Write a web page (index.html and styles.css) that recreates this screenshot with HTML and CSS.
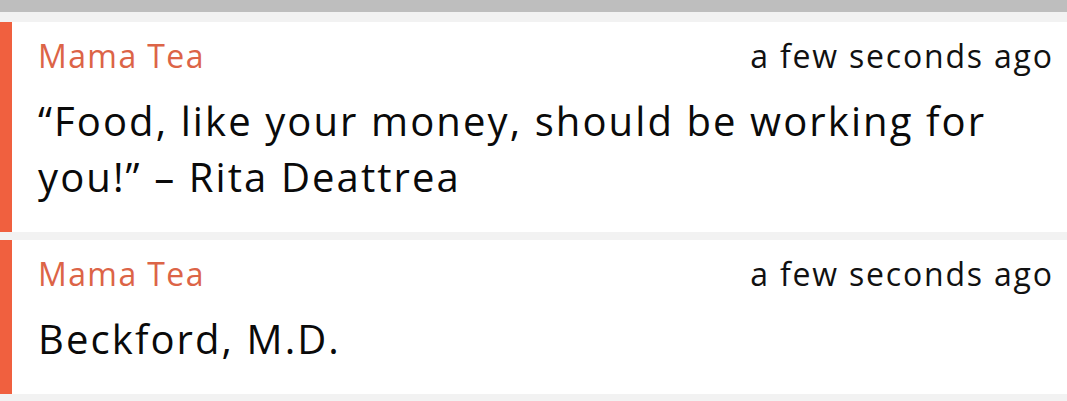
FILE: index.html
```html
<!DOCTYPE html>
<html lang="en">
<head>
<meta charset="utf-8">
<title>Feed</title>
<link rel="stylesheet" href="styles.css">
</head>
<body>
<div class="topbar"></div>
<div class="list">
  <div class="card">
    <div class="card-head">
      <span class="author">Mama Tea</span>
      <span class="time">a few seconds ago</span>
    </div>
    <div class="message">“Food, like your money, should be working for you!” – Rita Deattrea</div>
  </div>
  <div class="card">
    <div class="card-head">
      <span class="author">Mama Tea</span>
      <span class="time">a few seconds ago</span>
    </div>
    <div class="message">Beckford, M.D.</div>
  </div>
</div>
</body>
</html>
```
FILE: styles.css
```css
html, body {
  margin: 0;
  padding: 0;
}
body {
  background: #f2f2f2;
  font-family: "Open Sans", Lato, sans-serif;
  color: #111;
  width: 1067px;
  height: 401px;
  overflow: hidden;
}
.topbar {
  height: 12px;
  background: #bebebe;
}
.list {
  padding-top: 10px;
  display: flex;
  flex-direction: column;
  gap: 8px;
}
.card {
  background: #fff;
  border-left: 12px solid #f0603f;
  padding: 14px 15px 27px 26px;
}
.card-head {
  display: flex;
  justify-content: space-between;
  align-items: baseline;
  line-height: 40px;
  margin-bottom: 17px;
}
.author {
  color: #dc6447;
  font-size: 32px;
  letter-spacing: 1.4px;
}
.time {
  font-size: 32px;
  letter-spacing: 1.8px;
  margin-right: -1.8px;
  color: #111;
}
.message {
  font-size: 40px;
  letter-spacing: 2.1px;
  line-height: 56px;
  color: #0a0a0a;
}
```
